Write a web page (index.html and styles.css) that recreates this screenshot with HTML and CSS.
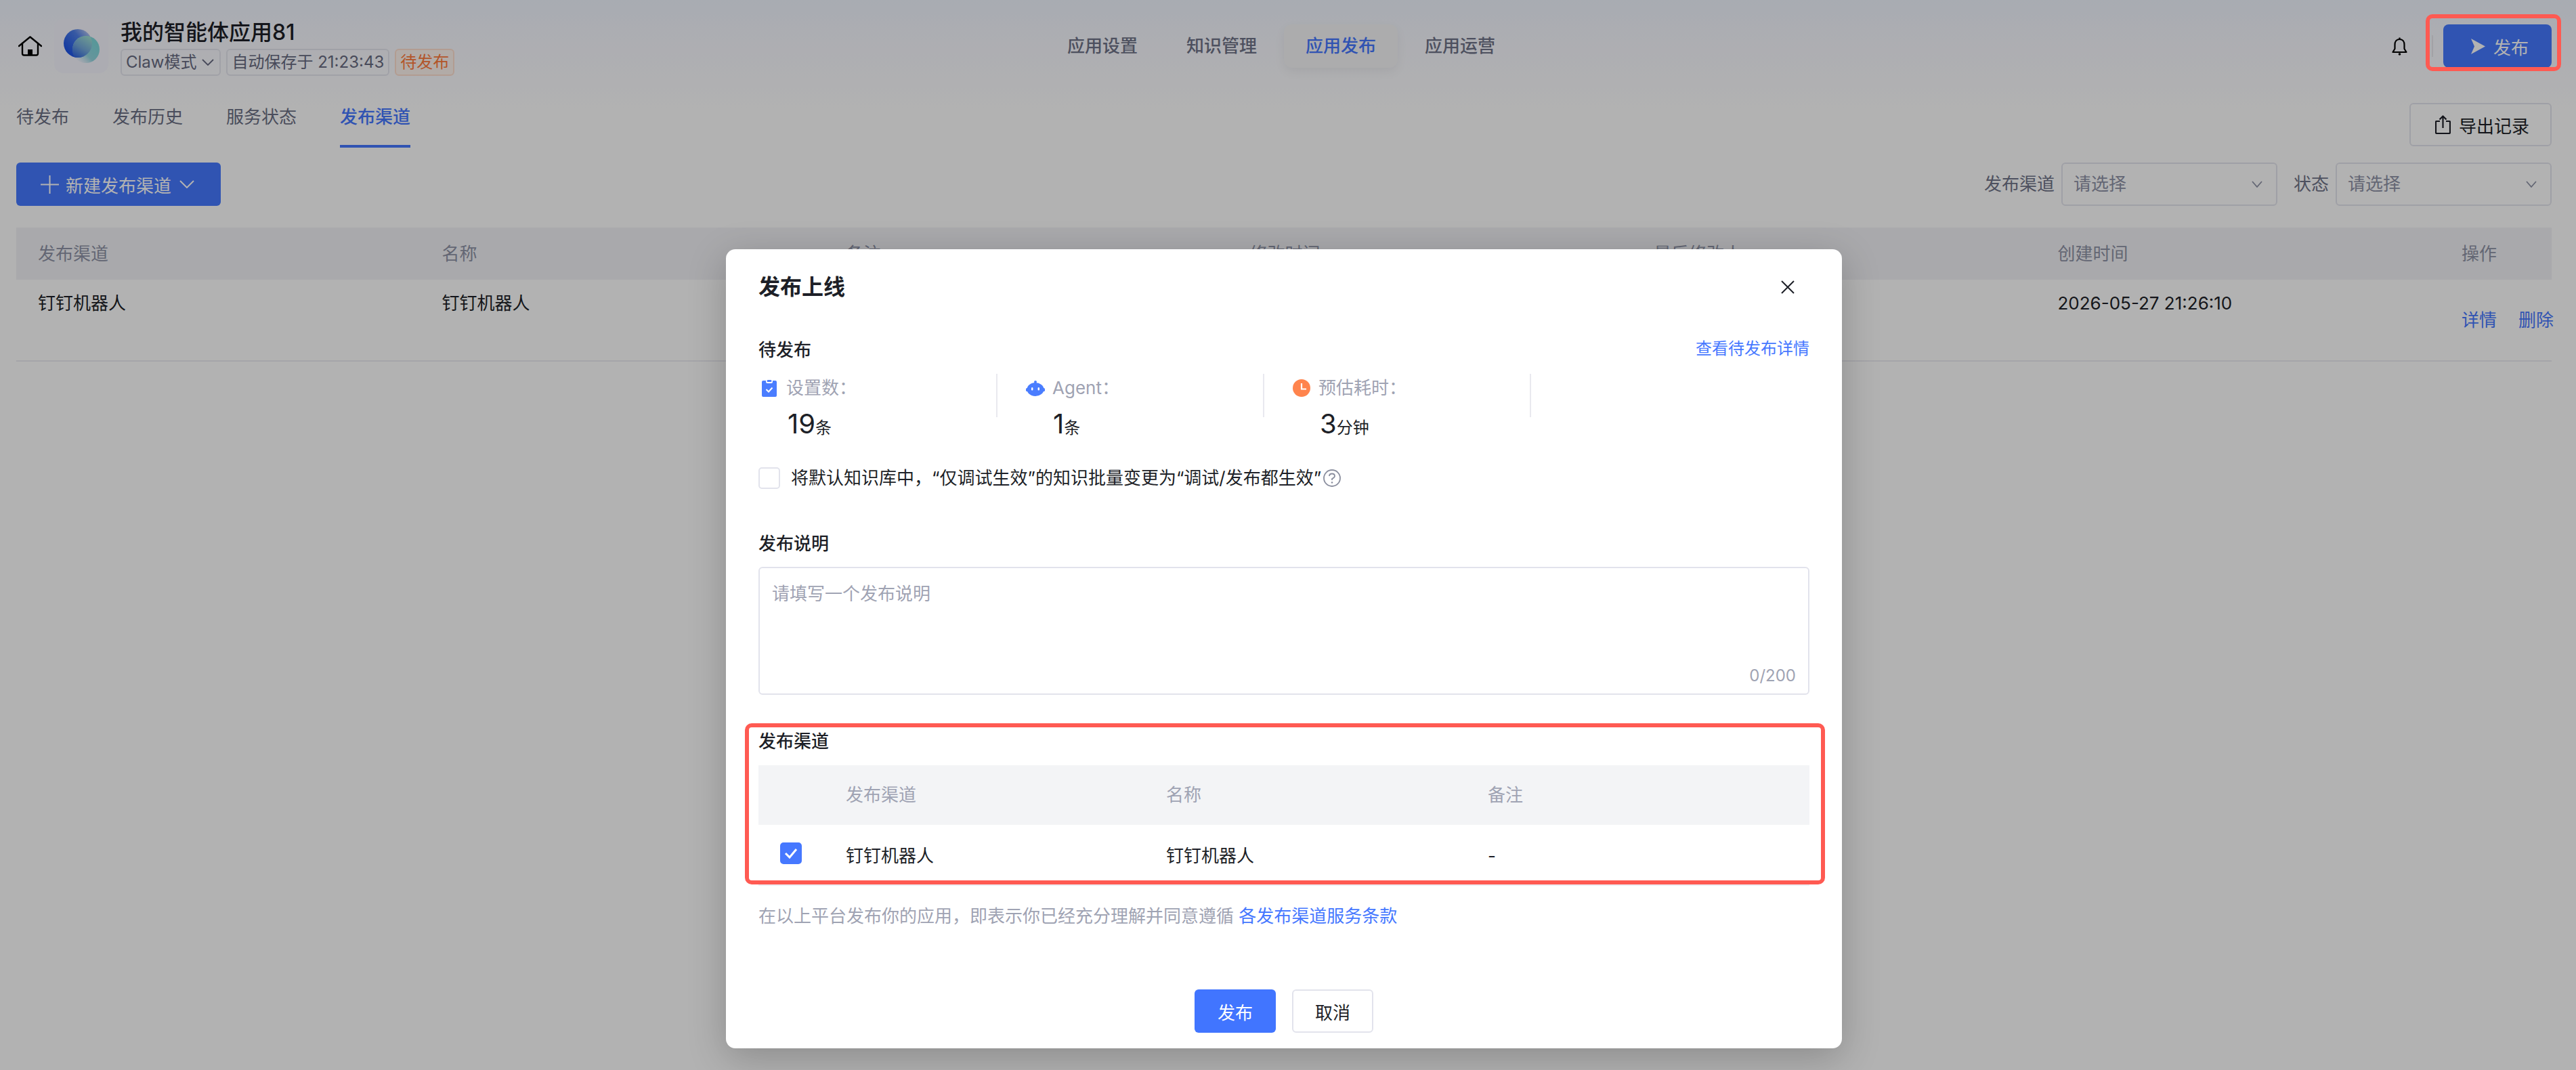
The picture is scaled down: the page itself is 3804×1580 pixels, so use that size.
FILE: index.html
```html
<!DOCTYPE html>
<html lang="zh-CN">
<head>
    <meta charset="UTF-8">
    <meta name="viewport" content="width=device-width, initial-scale=1.0">
    <title>发布上线</title>
    <link rel="stylesheet" href="styles.css">
</head>
<body>

    <div class="page">
        <header class="top-bar">
            <div class="app-info">
                <svg class="home-icon" viewBox="0 0 35 30" fill="none" stroke="#000" stroke-width="2.4" stroke-linejoin="round" stroke-linecap="round">
                    <path d="M1 15 L17.5 1.5 L34 15"/>
                    <path d="M6 11 V26 Q6 28.5 8.5 28.5 H26.5 Q29 28.5 29 26 V11"/>
                    <rect x="14" y="20" width="7" height="8.5" fill="#000" stroke="none"/>
                </svg>
                <div class="app-logo">
                    <svg viewBox="0 0 80 80" width="80" height="80">
                        <defs>
                            <linearGradient id="orb-back" x1="0.1" y1="0.8" x2="0.95" y2="0.1">
                                <stop offset="0" stop-color="#1b52e6"/>
                                <stop offset="0.6" stop-color="#4f80ea"/>
                                <stop offset="1" stop-color="#c3cff0"/>
                            </linearGradient>
                            <linearGradient id="orb-front" x1="0.9" y1="0.3" x2="0.2" y2="1">
                                <stop offset="0" stop-color="#7fd8dc"/>
                                <stop offset="0.55" stop-color="#93d6e0"/>
                                <stop offset="1" stop-color="#c5dff0" stop-opacity="0"/>
                            </linearGradient>
                            <linearGradient id="orb-lens" x1="0.75" y1="0.05" x2="0.2" y2="0.9">
                                <stop offset="0" stop-color="#a4e6d2"/>
                                <stop offset="0.55" stop-color="#72a8dc"/>
                                <stop offset="1" stop-color="#2a60e0"/>
                            </linearGradient>
                            <clipPath id="orb-clip">
                                <circle cx="35" cy="36" r="21"/>
                            </clipPath>
                        </defs>
                        <circle cx="35" cy="36" r="21" fill="url(#orb-back)"/>
                        <circle cx="47" cy="45" r="20" fill="url(#orb-front)"/>
                        <circle cx="47" cy="45" r="20" fill="url(#orb-lens)" clip-path="url(#orb-clip)"/>
                    </svg>
                </div>
                <div class="app-text">
                    <div class="app-name">我的智能体应用81</div>
                    <div class="app-tags">
                        <span class="tag">Claw模式
                            <svg class="tag-chevron" viewBox="0 0 18 10" fill="none" stroke="currentColor" stroke-width="1.8"><path d="M1 1 L9 9 L17 1"/></svg>
                        </span>
                        <span class="tag">自动保存于 21:23:43</span>
                        <span class="tag tag-orange">待发布</span>
                    </div>
                </div>
            </div>

            <nav class="main-nav">
                <a class="nav-item">应用设置</a>
                <a class="nav-item">知识管理</a>
                <a class="nav-item active">应用发布</a>
                <a class="nav-item">应用运营</a>
            </nav>

            <div class="top-actions">
                <svg class="bell-icon" viewBox="0 0 25 27" fill="none" stroke="#000" stroke-width="2.2" stroke-linejoin="round">
                    <path d="M12.5 3 C7.5 3 5.5 7 5.5 11 V17 L2.5 22 H22.5 L19.5 17 V11 C19.5 7 17.5 3 12.5 3 Z"/>
                    <path d="M12.5 0.5 V3"/>
                    <circle cx="12.5" cy="25" r="1.8" fill="#000" stroke="none"/>
                </svg>
                <span class="top-divider"></span>
                <button class="publish-btn">
                    <svg class="send-icon" viewBox="0 0 21 23"><path d="M0 0 L21 11.5 L0 23 L5 11.5 Z" fill="#fff"/></svg>
                    发布
                </button>
            </div>
        </header>

        <div class="tab-row">
            <div class="tabs">
                <a class="tab">待发布</a>
                <a class="tab">发布历史</a>
                <a class="tab">服务状态</a>
                <a class="tab active">发布渠道</a>
            </div>
            <button class="export-btn">
                <svg class="export-icon" viewBox="0 0 23 28" fill="none" stroke="#1d1f27" stroke-width="2.2" stroke-linejoin="round">
                    <path d="M7 9 H2 Q1 9 1 10 V25.5 Q1 27 2.5 27 H20.5 Q22 27 22 25.5 V10 Q22 9 21 9 H16"/>
                    <path d="M11.5 19 V1.5 M6.5 6.5 L11.5 1.5 L16.5 6.5"/>
                </svg>
                导出记录
            </button>
        </div>

        <div class="toolbar">
            <button class="new-btn">
                <svg class="plus-icon" viewBox="0 0 27 27" fill="none" stroke="#fff" stroke-width="2"><path d="M13.5 0 V27 M0 13.5 H27"/></svg>
                新建发布渠道
                <svg class="btn-chevron" viewBox="0 0 22 12" fill="none" stroke="#fff" stroke-width="2"><path d="M1 1 L11 11 L21 1"/></svg>
            </button>
            <div class="filters">
                <label class="filter-label">发布渠道</label>
                <div class="select">请选择
                    <svg class="select-chevron" viewBox="0 0 16 10" fill="none" stroke="currentColor" stroke-width="1.8"><path d="M1 1 L8 9 L15 1"/></svg>
                </div>
                <label class="filter-label filter-label-second">状态</label>
                <div class="select">请选择
                    <svg class="select-chevron" viewBox="0 0 16 10" fill="none" stroke="currentColor" stroke-width="1.8"><path d="M1 1 L8 9 L15 1"/></svg>
                </div>
            </div>
        </div>

        <div class="channel-table">
            <div class="channel-head">
                <div class="cell">发布渠道</div>
                <div class="cell">名称</div>
                <div class="cell">备注</div>
                <div class="cell">修改时间</div>
                <div class="cell">最后修改人</div>
                <div class="cell">创建时间</div>
                <div class="cell">操作</div>
            </div>
            <div class="channel-row">
                <div class="cell">钉钉机器人</div>
                <div class="cell">钉钉机器人</div>
                <div class="cell"></div>
                <div class="cell"></div>
                <div class="cell"></div>
                <div class="cell">2026-05-27 21:26:10</div>
                <div class="cell cell-actions"><a>详情</a><a>删除</a></div>
            </div>
        </div>
    </div>

    <div class="mask">
        <div class="modal">
            <div class="modal-header">
                <div class="modal-title">发布上线</div>
                <svg class="close-icon" viewBox="0 0 24 24" fill="none" stroke="#1d1f27" stroke-width="2"><path d="M3 3 L21 21 M21 3 L3 21"/></svg>
            </div>

            <div class="section-head">
                <div class="section-title">待发布</div>
                <a class="link small-link">查看待发布详情</a>
            </div>

            <div class="stats">
                <div class="stat stat-first">
                    <div class="stat-label">
                        <svg class="stat-icon" viewBox="0 0 22 25">
                            <path d="M2 1 H6 V2.5 Q6 5 8.5 5 H13.5 Q16 5 16 2.5 V1 H20 Q22 1 22 3 V23 Q22 25 20 25 H2 Q0 25 0 23 V3 Q0 1 2 1 Z" fill="#4a7dff"/>
                            <rect x="7.5" y="0" width="7" height="3" rx="1.5" fill="#4a7dff"/>
                            <path d="M6.5 14 L10 17.5 L15.5 11.5" fill="none" stroke="#fff" stroke-width="2"/>
                        </svg>
                        设置数：
                    </div>
                    <div class="stat-value">19<small>条</small></div>
                </div>
                <span class="stat-divider"></span>
                <div class="stat">
                    <div class="stat-label">
                        <svg class="stat-icon icon-robot" viewBox="0 0 28 23">
                            <circle cx="14" cy="2" r="2" fill="#4a7dff"/>
                            <ellipse cx="14" cy="13" rx="12.5" ry="10" fill="#4a7dff"/>
                            <rect x="0" y="11" width="28" height="5" rx="1.5" fill="#4a7dff"/>
                            <rect x="8" y="10" width="2.4" height="4.5" rx="1.2" fill="#fff"/>
                            <rect x="17.6" y="10" width="2.4" height="4.5" rx="1.2" fill="#fff"/>
                        </svg>
                        Agent：
                    </div>
                    <div class="stat-value">1<small>条</small></div>
                </div>
                <span class="stat-divider"></span>
                <div class="stat">
                    <div class="stat-label">
                        <svg class="stat-icon icon-clock" viewBox="0 0 26 26">
                            <circle cx="13" cy="13" r="13" fill="#ff844d"/>
                            <path d="M13 6 V14.5 H20" fill="none" stroke="#fff" stroke-width="2.2"/>
                        </svg>
                        预估耗时：
                    </div>
                    <div class="stat-value">3<small>分钟</small></div>
                </div>
                <span class="stat-divider"></span>
            </div>

            <div class="check-row">
                <span class="checkbox"></span>
                <span>将默认知识库中，“仅调试生效”的知识批量变更为“调试/发布都生效”</span>
                <svg class="help-icon" viewBox="0 0 28 28" fill="none" stroke="#8a8e9e" stroke-width="1.8">
                    <circle cx="14" cy="14" r="12"/>
                    <path d="M10 11 Q10 7.5 14 7.5 Q18 7.5 18 11 Q18 13 14 15 V17"/>
                    <circle cx="14" cy="20.5" r="1.3" fill="#8a8e9e" stroke="none"/>
                </svg>
            </div>

            <div class="section-title desc-title">发布说明</div>
            <div class="textarea">
                <span class="placeholder">请填写一个发布说明</span>
                <span class="word-count">0/200</span>
            </div>

            <div class="section-title channel-title">发布渠道</div>
            <div class="pick-table">
                <div class="pick-head">
                    <div></div>
                    <div>发布渠道</div>
                    <div>名称</div>
                    <div>备注</div>
                </div>
                <div class="pick-row">
                    <div><span class="checkbox checked">
                        <svg viewBox="0 0 20 16" fill="none" stroke="#fff" stroke-width="3"><path d="M2 8 L8 14 L18 2"/></svg>
                    </span></div>
                    <div>钉钉机器人</div>
                    <div>钉钉机器人</div>
                    <div>-</div>
                </div>
            </div>

            <div class="notice">在以上平台发布你的应用，即表示你已经充分理解并同意遵循 <a class="link">各发布渠道服务条款</a></div>

            <div class="modal-footer">
                <button class="btn-primary">发布</button>
                <button class="btn-cancel">取消</button>
            </div>
        </div>
    </div>

    <div class="red-mark mark-publish"></div>
    <div class="red-mark mark-channels"></div>

</body>
</html>
```

FILE: styles.css
```css
/* Page base */
* {
    box-sizing: border-box;
}

body {
    margin: 0;
    width: 3804px;
    height: 1580px;
    overflow: hidden;
    position: relative;
    font-family: Inter, "Noto Sans CJK SC", sans-serif;
    font-size: 26px;
    line-height: 40px;
    color: #1d1f27;
    background-color: #fff;
}

button {
    font-family: inherit;
    font-size: 26px;
    border: none;
    padding: 0;
    display: flex;
    align-items: center;
}

.page {
    height: 100%;
    background: linear-gradient(180deg, #f1f6ff 0, #f8f9ff 60px, #fff 160px);
}

/* Top bar */
.top-bar {
    height: 136px;
    display: grid;
    grid-template-columns: 1544px auto 1fr;
    align-items: center;
}

.app-info {
    display: flex;
    align-items: center;
    padding-left: 27px;
}

.home-icon {
    width: 35px;
    height: 30px;
    margin-right: 18px;
}

.app-logo {
    width: 80px;
    height: 80px;
    margin-right: 18px;
    border-radius: 14px;
    background-color: #f6f6ff;
}

.app-text {
    height: 88px;
}

.app-name {
    font-size: 32px;
    line-height: 48px;
    font-weight: 500;
}

.app-tags {
    display: flex;
    gap: 8px;
}

.tag {
    height: 40px;
    padding: 0 6px;
    display: flex;
    align-items: center;
    gap: 8px;
    font-size: 24px;
    color: #676b82;
    border: 2px solid #e6e7f0;
    border-radius: 6px;
}

.tag-chevron {
    width: 18px;
    height: 10px;
    margin-right: 2px;
}

.tag-orange {
    color: #ff7a3c;
    background-color: #fff5ef;
    border-color: #ffe0d0;
}

.main-nav {
    display: flex;
    gap: 8px;
}

.nav-item {
    width: 168px;
    height: 64px;
    line-height: 64px;
    text-align: center;
    font-weight: 500;
    color: #6f7388;
    border-radius: 12px;
}

.nav-item.active {
    color: #4678ff;
    background-color: #f6f6f8;
    box-shadow: 0 6px 16px rgba(0, 0, 0, 0.06);
}

.top-actions {
    display: flex;
    align-items: center;
    justify-content: flex-end;
    padding-right: 36px;
}

.bell-icon {
    width: 25px;
    height: 27px;
    margin-right: 35px;
}

.top-divider {
    width: 2px;
    height: 32px;
    margin-right: 15px;
    background-color: #e8e8ee;
}

.publish-btn {
    width: 160px;
    height: 64px;
    padding-left: 41px;
    gap: 12px;
    color: #fff;
    background-color: #4579ff;
    border-radius: 8px;
}

.send-icon {
    width: 21px;
    height: 23px;
}

/* Tabs under the top bar */
.tab-row {
    display: flex;
    justify-content: space-between;
    padding: 0 36px 0 24px;
}

.tabs {
    display: flex;
    gap: 64px;
}

.tab {
    height: 82px;
    padding-top: 17px;
    color: #6b6f84;
    border-bottom: 4px solid transparent;
}

.tab.active {
    font-weight: 500;
    color: #4678ff;
    border-bottom-color: #4678ff;
}

.export-btn {
    width: 210px;
    height: 64px;
    margin-top: 16px;
    padding-left: 36px;
    gap: 12px;
    color: #1d1f27;
    background-color: #fff;
    border: 2px solid #e4e5ee;
    border-radius: 6px;
}

.export-icon {
    width: 23px;
    height: 28px;
}

/* Toolbar */
.toolbar {
    display: flex;
    justify-content: space-between;
    margin-top: 22px;
    padding: 0 36px 0 24px;
}

.new-btn {
    width: 302px;
    height: 64px;
    padding-left: 36px;
    color: #fff;
    background-color: #4579ff;
    border-radius: 6px;
}

.plus-icon {
    width: 27px;
    height: 27px;
    margin-right: 10px;
}

.btn-chevron {
    width: 22px;
    height: 12px;
    margin-left: 12px;
}

.filters {
    display: flex;
    align-items: center;
}

.filter-label {
    margin-right: 10px;
    color: #6f7388;
}

.filter-label-second {
    margin-left: 24px;
}

.select {
    width: 319px;
    height: 64px;
    padding: 0 20px 0 16px;
    display: flex;
    align-items: center;
    justify-content: space-between;
    color: #8f93a6;
    border: 2px solid #e4e5ee;
    border-radius: 6px;
}

.select-chevron {
    width: 16px;
    height: 10px;
}

/* Table behind the dialog */
.channel-table {
    margin: 32px 36px 0 24px;
}

.channel-head,
.channel-row {
    display: grid;
    grid-template-columns: repeat(6, 596.5px) 1fr;
}

.channel-head {
    height: 77px;
    align-items: center;
    color: #8f93a6;
    background-color: #f3f3f7;
}

.channel-row {
    height: 121px;
    padding-top: 15px;
    border-bottom: 2px solid #ececf2;
}

.cell {
    padding-left: 32px;
}

.cell-actions {
    display: flex;
    gap: 32px;
    padding-top: 25px;
    color: #4678ff;
    white-space: nowrap;
}

/* Dialog */
.mask {
    position: absolute;
    top: 0;
    left: 0;
    width: 100%;
    height: 100%;
    display: flex;
    justify-content: center;
    align-items: flex-start;
    padding: 368px 12px 0 0;
    background-color: rgba(0, 0, 0, 0.3);
}

.modal {
    width: 1648px;
    height: 1180px;
    padding: 0 48px;
    background-color: #fff;
    border-radius: 14px;
    box-shadow: 0 14px 56px rgba(0, 0, 0, 0.22);
}

.modal-header {
    height: 112px;
    display: flex;
    align-items: center;
    justify-content: space-between;
}

.modal-title {
    font-size: 32px;
    font-weight: 600;
}

.close-icon {
    width: 24px;
    height: 24px;
    margin-right: 20px;
}

.section-head {
    display: flex;
    justify-content: space-between;
    margin-top: 17px;
}

.section-title {
    font-weight: 500;
}

.link {
    color: #4678ff;
}

.small-link {
    font-size: 24px;
    line-height: 36px;
}

.stats {
    display: flex;
    align-items: flex-start;
    height: 96px;
    margin-top: 15px;
}

.stat {
    width: 392px;
    padding-left: 42px;
}

.stat-first {
    width: 351px;
    padding-left: 5px;
}

.stat-label {
    display: flex;
    align-items: center;
    height: 42px;
    color: #9fa3b3;
}

.stat-icon {
    width: 22px;
    height: 25px;
    margin-right: 14px;
}

.icon-robot {
    width: 28px;
    height: 23px;
    margin-right: 11px;
}

.icon-clock {
    width: 26px;
    height: 26px;
    margin-right: 12px;
}

.stat-value {
    margin-top: 5px;
    padding-left: 40px;
    font-size: 40px;
    line-height: 54px;
}

.stat-first .stat-value {
    padding-left: 38px;
}

.stat-value small {
    font-size: 24px;
}

.stat-divider {
    width: 2px;
    height: 64px;
    background-color: #e9e9ef;
}

.check-row {
    display: flex;
    align-items: center;
    height: 32px;
    margin-top: 42px;
}

.checkbox {
    display: inline-block;
    width: 32px;
    height: 32px;
    margin-right: 16px;
    border: 2px solid #e2e3ec;
    border-radius: 5px;
}

.checkbox.checked {
    display: flex;
    align-items: center;
    justify-content: center;
    margin: 0;
    background-color: #4678ff;
    border-color: #4678ff;
}

.checkbox.checked svg {
    width: 20px;
    height: 16px;
}

.help-icon {
    width: 28px;
    height: 28px;
    margin-left: 2px;
}

.desc-title {
    margin-top: 61px;
}

.textarea {
    height: 189px;
    margin-top: 14px;
    padding: 18px 18px 0;
    position: relative;
    border: 2px solid #e2e3ec;
    border-radius: 6px;
}

.placeholder {
    color: #9fa3b3;
}

.word-count {
    position: absolute;
    right: 18px;
    bottom: 6px;
    font-size: 24px;
    color: #9fa3b3;
}

.channel-title {
    margin-top: 49px;
}

.pick-head,
.pick-row {
    display: grid;
    grid-template-columns: 129px 473px 475px 1fr;
    align-items: center;
}

.pick-head {
    height: 88px;
    margin-top: 15px;
    color: #9fa3b3;
    background-color: #f3f4f6;
}

.pick-row {
    height: 90px;
    padding-top: 4px;
    border-bottom: 2px solid #ececf2;
}

.pick-row .checkbox {
    margin: -8px 0 0 32px;
}

.notice {
    margin-top: 25px;
    color: #9fa3b3;
}

.modal-footer {
    display: flex;
    justify-content: center;
    gap: 24px;
    margin-top: 88px;
}

.btn-primary,
.btn-cancel {
    width: 120px;
    height: 64px;
    justify-content: center;
    border-radius: 6px;
}

.btn-primary {
    color: #fff;
    background-color: #4175ff;
}

.btn-cancel {
    color: #1d1f27;
    background-color: #fff;
    border: 2px solid #e2e3ec;
}

/* Red annotation frames on top of the screenshot */
.red-mark {
    position: absolute;
    border: 6px solid #ff5a52;
    border-radius: 10px;
}

.mark-publish {
    left: 3582px;
    top: 21px;
    width: 200px;
    height: 84px;
}

.mark-channels {
    left: 1100px;
    top: 1068px;
    width: 1595px;
    height: 238px;
}
```
